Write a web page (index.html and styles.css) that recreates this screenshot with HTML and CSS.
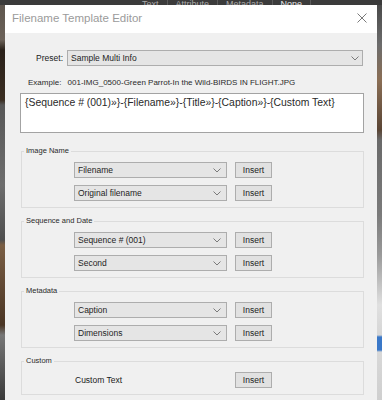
FILE: index.html
```html
<!DOCTYPE html>
<html lang="en">
<head>
    <meta charset="UTF-8">
    <meta name="viewport" content="width=device-width, initial-scale=1.0">
    <title>Filename Template Editor</title>
    <link rel="stylesheet" href="styles.css">
</head>
<body>
<div class="screen">
    <div class="topbar">
        <span class="tab">Text</span><span class="sep"></span>
        <span class="tab">Attribute</span><span class="sep"></span>
        <span class="tab">Metadata</span><span class="sep"></span>
        <span class="tab active">None</span><span class="sep"></span>
    </div>

    <div class="desk">
        <div class="edge edge-left"></div>

        <div class="dialog">
            <div class="titlebar">
                <span class="title">Filename Template Editor</span>
                <svg class="close" width="10" height="10" viewBox="0 0 10 10">
                    <path d="M0.5 0.5L9.5 9.5M9.5 0.5L0.5 9.5" stroke="#7a7a7a" stroke-width="1" fill="none"/>
                </svg>
            </div>

            <div class="content">
                <div class="preset-row">
                    <span class="preset-label">Preset:</span>
                    <div class="select select-wide">
                        <span>Sample Multi Info</span>
                        <svg class="chev" width="8" height="5" viewBox="0 0 8 5"><path d="M0.5 0.5L4 4L7.5 0.5" stroke="#7a7a7a" fill="none"/></svg>
                    </div>
                </div>

                <div class="example">
                    <span class="example-label">Example:</span>
                    <span>001-IMG_0500-Green Parrot-In the Wild-BIRDS IN FLIGHT.JPG</span>
                </div>

                <div class="template">{Sequence # (001)»}-{Filename»}-{Title»}-{Caption»}-{Custom Text}</div>

                <fieldset class="group">
                    <legend>Image Name</legend>
                    <div class="token-row">
                        <div class="select">
                            <span>Filename</span>
                            <svg class="chev" width="8" height="5" viewBox="0 0 8 5"><path d="M0.5 0.5L4 4L7.5 0.5" stroke="#7a7a7a" fill="none"/></svg>
                        </div>
                        <button class="insert" type="button">Insert</button>
                    </div>
                    <div class="token-row">
                        <div class="select">
                            <span>Original filename</span>
                            <svg class="chev" width="8" height="5" viewBox="0 0 8 5"><path d="M0.5 0.5L4 4L7.5 0.5" stroke="#7a7a7a" fill="none"/></svg>
                        </div>
                        <button class="insert" type="button">Insert</button>
                    </div>
                </fieldset>

                <fieldset class="group">
                    <legend>Sequence and Date</legend>
                    <div class="token-row">
                        <div class="select">
                            <span>Sequence # (001)</span>
                            <svg class="chev" width="8" height="5" viewBox="0 0 8 5"><path d="M0.5 0.5L4 4L7.5 0.5" stroke="#7a7a7a" fill="none"/></svg>
                        </div>
                        <button class="insert" type="button">Insert</button>
                    </div>
                    <div class="token-row">
                        <div class="select">
                            <span>Second</span>
                            <svg class="chev" width="8" height="5" viewBox="0 0 8 5"><path d="M0.5 0.5L4 4L7.5 0.5" stroke="#7a7a7a" fill="none"/></svg>
                        </div>
                        <button class="insert" type="button">Insert</button>
                    </div>
                </fieldset>

                <fieldset class="group">
                    <legend>Metadata</legend>
                    <div class="token-row">
                        <div class="select">
                            <span>Caption</span>
                            <svg class="chev" width="8" height="5" viewBox="0 0 8 5"><path d="M0.5 0.5L4 4L7.5 0.5" stroke="#7a7a7a" fill="none"/></svg>
                        </div>
                        <button class="insert" type="button">Insert</button>
                    </div>
                    <div class="token-row">
                        <div class="select">
                            <span>Dimensions</span>
                            <svg class="chev" width="8" height="5" viewBox="0 0 8 5"><path d="M0.5 0.5L4 4L7.5 0.5" stroke="#7a7a7a" fill="none"/></svg>
                        </div>
                        <button class="insert" type="button">Insert</button>
                    </div>
                </fieldset>

                <fieldset class="group">
                    <legend>Custom</legend>
                    <div class="token-row">
                        <span class="custom-label">Custom Text</span>
                        <button class="insert" type="button">Insert</button>
                    </div>
                </fieldset>
            </div>
        </div>

        <div class="edge edge-right"></div>
    </div>
</div>
</body>
</html>
```

FILE: styles.css
```css
*{
    box-sizing: border-box;
}
body{
    margin: 0;
    background-color: #2e2e2e;
    font-family: "Liberation Sans", Arial, sans-serif;
    color: #1b1b1b;
}
.screen{
    width: 382px;
    height: 400px;
    overflow: hidden;
}

/* lightroom window behind the dialog */
.topbar{
    height: 5px;
    overflow: hidden;
    display: flex;
    align-items: flex-start;
    padding-left: 138px;
    background-color: #3b3b3b;
}
.tab{
    font-size: 9px;
    line-height: 8px;
    color: #a9a9a9;
    padding: 0 4px;
}
.tab.active{
    color: #e6e6e6;
}
.sep{
    width: 1px;
    height: 5px;
    background-color: #5a5a5a;
    margin: 0 4px;
}
.desk{
    display: flex;
    height: 395px;
}
.edge{
    width: 5px;
    flex: none;
}
.edge-left{
    background: linear-gradient(#5e564e 0, #6b6158 35px, #2a211a 45px, #3b2e22 95px, #585858 100px, #6d6d6d 180px, #4f4f4f 235px, #7a5e44 240px, #4a3524 320px, #777 330px, #3a3a3a 395px);
}
.edge-right{
    background: linear-gradient(#4a4a4a 0, #6c6c6c 40px, #8a6e55 75px, #5a4535 125px, #6a6a6a 135px, #7b7b7b 210px, #9a9a9a 250px, #e0e0e0 300px, #d6d6d6 330px, #3a78c8 332px, #3a78c8 345px, #d8d8d8 347px, #cfcfcf 395px);
}

/* dialog */
.dialog{
    width: 372px;
    flex: none;
    background-color: #f0f0f0;
}
.titlebar{
    height: 28px;
    background-color: #fff;
    display: flex;
    align-items: center;
    justify-content: space-between;
    padding: 0 10px 2px 7px;
}
.title{
    font-size: 11.5px;
    color: #9b9b9b;
}
.content{
    padding: 17px 13px 0 15px;
}
.preset-row{
    display: grid;
    grid-template-columns: 43px 1fr;
    column-gap: 4px;
    align-items: center;
    margin-right: 1px;
}
.preset-label{
    text-align: right;
    font-size: 8.5px;
}
.select{
    height: 16px;
    border: 1px solid #adadad;
    background-color: #e5e5e5;
    display: flex;
    align-items: center;
    justify-content: space-between;
    padding: 0 5px 0 3px;
    font-size: 8.5px;
    color: #1e1e1e;
}
.select-wide{
    padding-right: 3px;
}
.example{
    font-size: 8px;
    line-height: 12px;
    margin: 11px 0 4px 8px;
    color: #2a2a2a;
}
.example-label{
    margin-right: 4px;
}
.template{
    height: 40px;
    background-color: #fff;
    border: 1px solid #a3a3a3;
    padding: 2px 4px;
    font-size: 10.4px;
    line-height: 13px;
    color: #2a2a2a;
    margin-bottom: 13px;
}
.group{
    margin: 8px 0 0 1px;
    padding: 6px 0 6px 52px;
    border: 1px solid #dcdcdc;
    min-width: 0;
}
.group legend{
    margin-left: -50px;
    padding: 0 2px;
    font-size: 7.5px;
    line-height: 10px;
    color: #2a2a2a;
}
.token-row{
    display: grid;
    grid-template-columns: 153px 37px;
    column-gap: 8px;
    align-items: center;
    height: 16px;
}
.token-row + .token-row{
    margin-top: 7px;
}
.insert{
    height: 16px;
    margin: 0;
    padding: 0;
    border: 1px solid #adadad;
    background-color: #e1e1e1;
    font-family: "Liberation Sans", Arial, sans-serif;
    font-size: 8.5px;
    color: #1b1b1b;
}
.custom-label{
    font-size: 8.5px;
    padding-left: 1px;
}
```
